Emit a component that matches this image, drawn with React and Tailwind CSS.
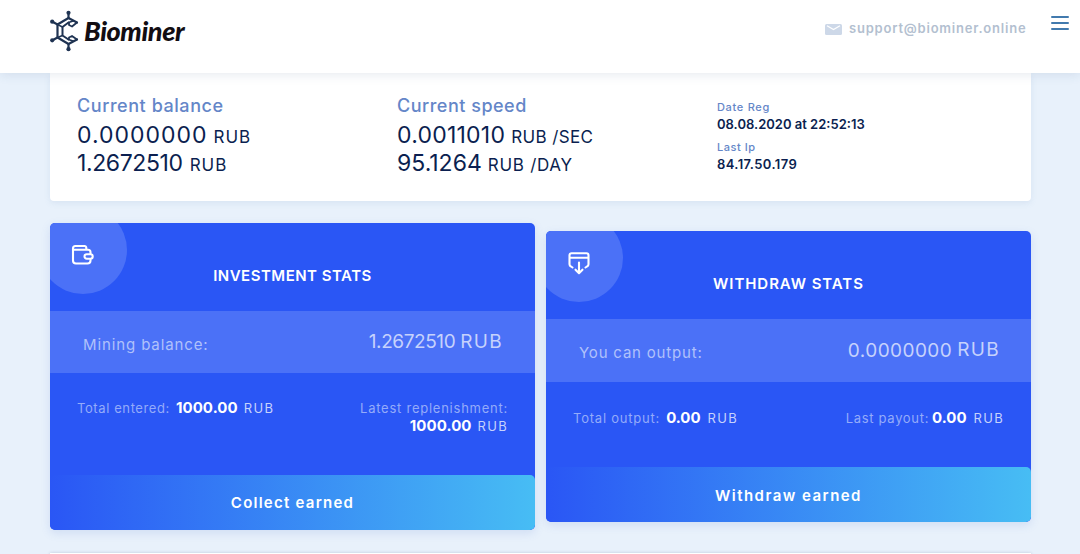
import React from 'react';

function Logo() {
  return (
    <div className="flex items-center">
      <svg className="h-[42px] w-[30px]" viewBox="0 0 30 42" fill="none" stroke="#1f3352" strokeWidth="2.2" strokeLinejoin="round" strokeLinecap="round">
        {/* outer ring */}
        <path d="M27 12.500L18.500 8L7.500 14.500v13L18.500 34L27 29.500" />
        {/* inner ring */}
        <path d="M18.500 12.500L12.500 17v8.500L18.500 29.500" strokeWidth="2" />
        <path d="M27 12.500L22 16.500l-3-1.500v-2.500M27 29.500L22 26l-3 1.500v2M18.500 12.500L23 11M18.500 29.500L23 31" strokeWidth="1.800" />
        <path d="M7.500 14.500l5 2.500M7.500 27.500l5-2" strokeWidth="1.400" />
        <path d="M18.500 8V3M18.500 34V39M7.500 14.500L2.500 11.800M7.500 27.500l-5 2.700" />
        <g fill="#1f3352" stroke="none">
          <circle cx="18.500" cy="2.800" r="2.100" />
          <circle cx="18.500" cy="39.200" r="2.100" />
          <circle cx="2.200" cy="11.700" r="2.100" />
          <circle cx="2.200" cy="30.300" r="2.100" />
        </g>
      </svg>
      <span className="ml-[4px] font-['Lato'] text-[27px] leading-[42px] font-black italic tracking-[-0.014em] text-[#120d12]">Biominer</span>
    </div>
  );
}

function WalletIcon() {
  return (
    <svg className="h-[22px] w-[24px]" viewBox="0 0 24 22" fill="none" stroke="#fff" strokeWidth="2.1" strokeLinecap="round" strokeLinejoin="round">
      <path d="M2 5v11.500a3 3 0 0 0 3 3h11.500a3 3 0 0 0 3-3v-.8M19.500 9.500V8.300a2.500 2.500 0 0 0-2.500-2.500H3.500M2 6V4.500A2.500 2.500 0 0 1 4.500 2h9A1.800 1.800 0 0 1 15.300 3.800V5.500" />
      <path d="M19.500 10.300h-3.800a2.200 2.200 0 0 0 0 4.400H19.500a2.200 2.200 0 0 0 0-4.400z" />
    </svg>
  );
}

function WithdrawIcon() {
  return (
    <svg className="h-[24px] w-[24px]" viewBox="0 0 24 24" fill="none" stroke="#fff" strokeWidth="2.1" strokeLinecap="round" strokeLinejoin="round">
      <path d="M5.500 15.500L4 14.500a2.500 2.500 0 0 1-1.500-2.300V3.200A2 2 0 0 1 4.500 1.200h15a2 2 0 0 1 2 2v9a2.500 2.500 0 0 1-1.500 2.300l-1.500 1M3 5.800h18" />
      <path d="M12 10.500V21M8.500 17.700l3.500 3.500l3.500-3.500" />
    </svg>
  );
}

function Header() {
  return (
    <header className="relative z-10 flex h-[73px] items-start justify-between bg-white pr-[11px] pl-[50px] shadow-[0_2px_10px_rgba(60,90,130,0.12)]">
      <div className="pt-[10px]">
        <Logo />
      </div>
      <div className="flex items-start">
        <div className="mt-[18px] flex items-center">
          <svg className="mt-[2px] h-[11px] w-[17px]" viewBox="0 0 17 11">
            <rect width="17" height="11" rx="1.500" fill="#cdd8e8" />
            <path d="M2 1.800l6.500 3.700L15 1.800" fill="none" stroke="#fff" strokeWidth="1.200" />
          </svg>
          <span className="ml-[7px] w-[177px] text-[13px] leading-[20px] font-semibold tracking-[0.061em] whitespace-nowrap text-[#b3bfd0]">support@biominer.online</span>
        </div>
        <button className="mt-[16px] ml-[25px] flex w-[18px] flex-col gap-[4.5px]">
          <span className="h-[1.500px] w-full rounded bg-[#427aae]" />
          <span className="h-[1.500px] w-full rounded bg-[#427aae]" />
          <span className="h-[1.500px] w-full rounded bg-[#427aae]" />
        </button>
      </div>
    </header>
  );
}

function Amount({ value, unit, tracking, unitClass }) {
  return (
    <div className="h-[28px] leading-[28px] whitespace-nowrap text-[#0b1f50]">
      <span className={`text-[23px] ${tracking}`}>{value}</span>
      <span className={`text-[17px] ${unitClass}`}>{unit}</span>
    </div>
  );
}

function Summary() {
  return (
    <section className="flex h-[128px] rounded-b-[4px] bg-white pt-[22px] pl-[27px] shadow-[0_2px_6px_rgba(90,130,180,0.12)]">
      <div className="w-[320px]">
        <h3 className="mb-[4px] text-[18px] leading-[22px] font-medium tracking-[0.031em] text-[#6486c8]">Current balance</h3>
        <Amount value="0.0000000" unit="RUB" tracking="tracking-[0.043em]" unitClass="ml-[6px] tracking-[0.060em]" />
        <Amount value="1.2672510" unit="RUB" tracking="tracking-[-0.017em]" unitClass="ml-[7px] tracking-[0.060em]" />
      </div>
      <div className="w-[320px]">
        <h3 className="mb-[4px] text-[18px] leading-[22px] font-medium tracking-[0.028em] text-[#6486c8]">Current speed</h3>
        <Amount value="0.0011010" unit="RUB /SEC" tracking="tracking-[0.010em]" unitClass="ml-[6px] tracking-[0.022em]" />
        <Amount value="95.1264" unit="RUB /DAY" tracking="tracking-[0em]" unitClass="ml-[6px] tracking-[0.042em]" />
      </div>
      <div className="pt-[3px] whitespace-nowrap">
        <div className="text-[11px] leading-[18px] font-medium tracking-[0.062em] text-[#6486c8]">Date Reg</div>
        <div className="mb-[6px] text-[13px] leading-[16px] font-semibold tracking-[0em] text-[#0b1f50]">08.08.2020 at 22:52:13</div>
        <div className="text-[11px] leading-[18px] font-medium tracking-[0.050em] text-[#6486c8]">Last Ip</div>
        <div className="text-[13px] leading-[16px] font-semibold tracking-[0.030em] text-[#0b1f50]">84.17.50.179</div>
      </div>
    </section>
  );
}

function StatsCard({ icon, title, titleClass, band, button, buttonClass, children }) {
  return (
    <article className="w-[485px] overflow-hidden rounded-[5px] bg-[#2a56f5] text-white shadow-[0_3px_10px_rgba(70,110,200,0.15)]">
      <div className="relative h-[88px]">
        <div className="absolute -top-[17px] -left-[11px] size-[88px] rounded-full bg-[#4b71f7]" />
        <div className="absolute top-[21px] left-[21px]">{icon}</div>
        <h2 className={`relative pt-[43px] text-center text-[15px] leading-[20px] font-semibold ${titleClass}`}>{title}</h2>
      </div>
      {band}
      {children}
      <button className={`block h-[55px] w-full rounded-[5px] bg-linear-to-r/srgb from-[#2a56f5] to-[#47bdf4] text-[15px] leading-[54px] font-semibold ${buttonClass}`}>{button}</button>
    </article>
  );
}

function App() {
  return (
    <div className="h-[554px] overflow-hidden bg-[#e8f1fb] font-['Inter',sans-serif]">
      <Header />
      <main className="ml-[50px] w-[981px]">
        <Summary />
        <div className="mt-[22px] flex items-center justify-between">
          <StatsCard
            icon={<WalletIcon />}
            title="INVESTMENT STATS"
            titleClass="tracking-[0.033em]"
            button="Collect earned"
            buttonClass="tracking-[0.083em]"
            band={
              <div className="flex h-[62px] justify-between bg-[#4b71f7] pr-[32px] pl-[33px] whitespace-nowrap">
                <span className="pt-[24px] text-[15px] leading-[20px] tracking-[0.059em] text-[#b0c1fb]">Mining balance:</span>
                <div className="flex gap-[5px] pt-[19px] text-[19px] leading-[24px] text-[#c6d2fc]">
                  <span className="tracking-[-0.022em]">1.2672510</span>
                  <span className="tracking-[0.070em]">RUB</span>
                </div>
              </div>
            }
          >
            <div className="flex h-[102px] justify-between px-[27px] pt-[26px] text-[13px] leading-[18px] whitespace-nowrap">
              <div>
                <span className="tracking-[0.046em] text-[#94abfa]">Total entered:</span>
                <b className="ml-[6px] text-[15px] font-bold tracking-[0.006em]">1000.00</b>
                <span className="ml-[6px] tracking-[0.110em] text-[#c6d2fc]">RUB</span>
              </div>
              <div className="text-right">
                <div className="tracking-[0.058em] text-[#94abfa]">Latest replenishment:</div>
                <b className="text-[15px] font-bold tracking-[0.006em]">1000.00</b>
                <span className="ml-[6px] tracking-[0.100em] text-[#c6d2fc]">RUB</span>
              </div>
            </div>
          </StatsCard>
          <StatsCard
            icon={<WithdrawIcon />}
            title="WITHDRAW STATS"
            titleClass="tracking-[0.062em]"
            button="Withdraw earned"
            buttonClass="pt-[2px] tracking-[0.097em]"
            band={
              <div className="flex h-[63px] justify-between bg-[#4b71f7] pr-[31px] pl-[33px] whitespace-nowrap">
                <span className="pt-[24px] text-[15px] leading-[20px] tracking-[0.054em] text-[#b0c1fb]">You can output:</span>
                <div className="flex gap-[5px] text-[19px] leading-[24px] text-[#c6d2fc]">
                  <span className="pt-[20px] tracking-[0.023em]">0.0000000</span>
                  <span className="pt-[19px] tracking-[0.070em]">RUB</span>
                </div>
              </div>
            }
          >
            <div className="flex h-[85px] justify-between px-[27px] pt-[27px] text-[13px] leading-[18px] whitespace-nowrap">
              <div>
                <span className="tracking-[0.060em] text-[#94abfa]">Total output:</span>
                <b className="ml-[6px] text-[15px] font-bold tracking-[0em]">0.00</b>
                <span className="ml-[7px] tracking-[0.100em] text-[#c6d2fc]">RUB</span>
              </div>
              <div>
                <span className="tracking-[0.052em] text-[#94abfa]">Last payout:</span>
                <b className="ml-[3px] text-[15px] font-bold tracking-[0em]">0.00</b>
                <span className="ml-[7px] tracking-[0.100em] text-[#c6d2fc]">RUB</span>
              </div>
            </div>
          </StatsCard>
        </div>
        <div className="mt-[23px] h-[40px] bg-white shadow-[0_0_3px_rgba(90,110,140,0.3)]" />
      </main>
    </div>
  );
}

export default App;
